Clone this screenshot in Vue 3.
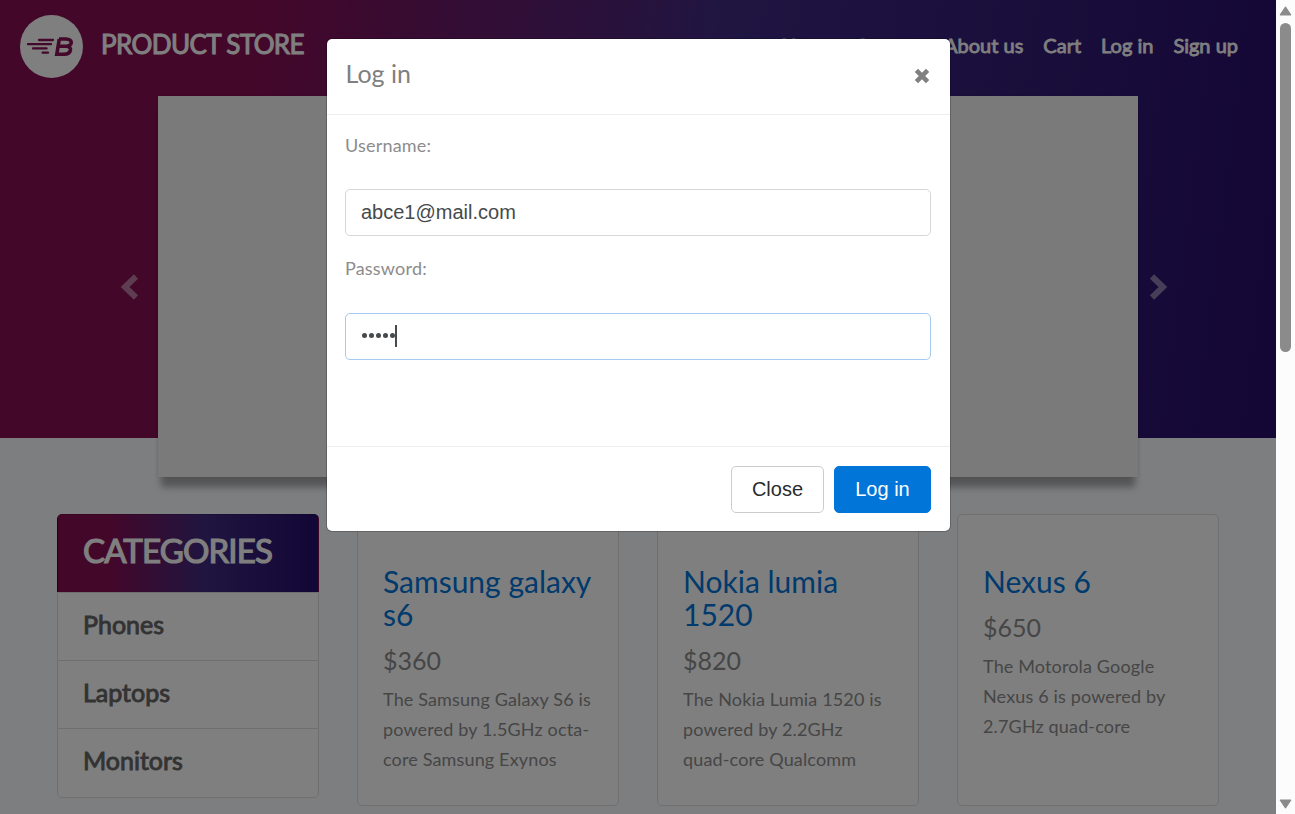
<script setup>
import { ref } from 'vue'

const links = ['Home', 'Contact', 'About us', 'Cart', 'Log in', 'Sign up']
const categories = ['Phones', 'Laptops', 'Monitors']
const products = [
  { name: 'Samsung galaxy s6', price: '$360', lines: ['The Samsung Galaxy S6 is', 'powered by 1.5GHz octa-', 'core Samsung Exynos'] },
  { name: 'Nokia lumia 1520', price: '$820', lines: ['The Nokia Lumia 1520 is', 'powered by 2.2GHz', 'quad-core Qualcomm'] },
  { name: 'Nexus 6', price: '$650', lines: ['The Motorola Google', 'Nexus 6 is powered by', '2.7GHz quad-core'] },
]
const username = ref('abce1@mail.com')
</script>

<template>
  <div class="window">
    <div class="page">
      <header class="hero">
        <nav class="navbar">
          <a class="brand">
            <svg class="logo" viewBox="0 0 63 63" aria-hidden="true">
              <circle cx="31.5" cy="31.5" r="31.5" fill="#fff" />
              <g stroke="#861054" stroke-width="2.3" stroke-linecap="round" fill="none">
                <path d="M19 25H33M8 29.2H31M13 33.4H26.6M22.6 37.7H28" />
                <path d="M39 24H46C53.5 24 52.5 31.3 46 31.3H38M46 31.3C53 31.3 51.5 39.2 44 39.2H36.8L39.3 24" stroke-width="3.6" stroke-linecap="butt" />
              </g>
            </svg>
            <span class="brand-name">PRODUCT STORE</span>
          </a>
          <ul class="links">
            <li v-for="l in links" :key="l">{{ l }}</li>
          </ul>
        </nav>
        <div class="carousel">
          <div class="control">
            <svg width="18" height="26" viewBox="0 0 18 26"><path d="M15 2.5L4 13L15 23.5" /></svg>
          </div>
          <div class="slide"></div>
          <div class="control">
            <svg width="18" height="26" viewBox="0 0 18 26"><path d="M3 2.5L14 13L3 23.5" /></svg>
          </div>
        </div>
      </header>

      <main class="content">
        <aside class="categories">
          <div class="cat-title">CATEGORIES</div>
          <div v-for="c in categories" :key="c" class="cat">{{ c }}</div>
        </aside>
        <article v-for="p in products" :key="p.name" class="card">
          <h4>{{ p.name }}</h4>
          <h5>{{ p.price }}</h5>
          <p><span v-for="t in p.lines" :key="t">{{ t }}</span></p>
        </article>
      </main>

      <div class="backdrop">
        <section class="modal">
          <div class="modal-header">
            <h5>Log in</h5>
            <svg class="close" width="16" height="16" viewBox="0 0 16 16"><path d="M2.4 2.4L13.6 13.6M13.6 2.4L2.4 13.6" /></svg>
          </div>
          <div class="modal-body">
            <label>Username:</label>
            <div class="field">{{ username }}</div>
            <label>Password:</label>
            <div class="field focused">
              <i v-for="n in 5" :key="n" class="dot"></i><i class="caret"></i>
            </div>
          </div>
          <div class="modal-footer">
            <button class="btn">Close</button>
            <button class="btn primary">Log in</button>
          </div>
        </section>
      </div>
    </div>
    <div class="scrollbar">
      <svg width="13" height="10" viewBox="0 0 13 10"><path d="M6.5 0.8L12 9H1Z" /></svg>
      <div class="thumb"></div>
      <svg width="13" height="10" viewBox="0 0 13 10"><path d="M6.5 9.2L12 1H1Z" /></svg>
    </div>
  </div>
</template>

<style>
body { margin: 0; overflow: hidden; }
</style>

<style scoped>
* { box-sizing: border-box; }
h4, h5, p, ul { margin: 0; padding: 0; font-weight: 400; }
.window { display: flex; width: 1295px; height: 814px; overflow: hidden; font-family: Lato, sans-serif; }
.page { position: relative; width: 1276px; height: 814px; background: #fafcff; color: #8c8c8c; }
.hero { height: 438px; background: linear-gradient(97deg, #860e54 20%, #402b84 55%, #290f6c 98%); }
.navbar { display: flex; justify-content: space-between; height: 96px; padding: 15px 38px 0 20px; color: #fff; }
.brand { display: flex; gap: 18px; }
.logo { width: 63px; height: 63px; }
.brand-name { font-size: 26px; line-height: 58px; letter-spacing: -0.6px; -webkit-text-stroke: 1px #fff; }
.links { display: flex; gap: 20px; list-style: none; font-size: 20px; line-height: 60px; letter-spacing: 0; -webkit-text-stroke: 0.8px #fff; }
.carousel { display: flex; align-items: center; height: 381px; padding-left: 121px; }
.slide { width: 980px; height: 381px; margin: 0 11px 0 19px; background: #f5f5f5; box-shadow: 0 13px 7px -3px rgba(0, 0, 0, 0.33), 0 0 2px rgba(0, 0, 0, 0.12); }
.control { width: 18px; height: 26px; }
.control svg { display: block; fill: none; stroke: #fff; stroke-width: 6; opacity: 0.45; }
.content { display: flex; align-items: flex-start; gap: 38px; padding: 76px 0 0 57px; }
.categories { width: 262px; height: 284px; color: #666; font-size: 25px; letter-spacing: 0; -webkit-text-stroke: 0.9px #666; }
.cat-title { height: 78px; padding-left: 25px; border: 1px solid rgba(0, 0, 0, 0.125); border-bottom: 0; border-radius: 5px 5px 0 0; background: linear-gradient(90deg, #860e54 20%, #402b80 56%, #260e6e 98%); color: #fff; font-size: 33px; line-height: 71px; letter-spacing: -0.85px; -webkit-text-stroke: 1.2px #fff; }
.cat { height: 68px; padding-left: 25px; border: 1px solid #dfdfdf; border-bottom: 0; background: #fff; line-height: 63px; }
.cat:last-child { height: 70px; border-bottom: 1px solid #dfdfdf; border-radius: 0 0 5px 5px; }
.card { width: 262px; height: 292px; padding: 50px 25px 0; border: 1px solid #dfdfdf; border-radius: 5px; background: #fff; }
.card h4 { color: #0275d8; font-size: 30px; line-height: 33px; }
.card h5 { margin-top: 15px; font-size: 25px; line-height: 28px; }
.card p { margin-top: 10px; font-size: 18px; line-height: 30px; letter-spacing: 0.15px; }
.card p span { display: block; white-space: nowrap; }
.backdrop { position: absolute; inset: 0; background: rgba(0, 0, 0, 0.5); }
.modal { width: 625px; height: 494px; margin: 38px 0 0 326px; border: 1px solid rgba(0, 0, 0, 0.2); border-radius: 6px; background: #fff; background-clip: padding-box; color: #8c8c8c; }
.modal-header { display: flex; justify-content: space-between; height: 76px; padding: 20px 20px 0 18.5px; border-bottom: 1px solid #eceeef; }
.modal-header h5 { color: #7f7f7f; font-size: 25px; line-height: 29px; }
.close { margin-top: 8.5px; fill: none; stroke: #808080; stroke-width: 4.6; }
.modal-body { height: 331px; padding: 15px 19px 0 18px; }
.modal-body label { display: block; height: 59px; font-size: 18px; line-height: 30px; letter-spacing: 0.2px; }
.field { display: flex; align-items: center; height: 47px; margin-bottom: 18px; padding: 0 15px 2px; border: 1px solid #d6d7d8; border-radius: 5px; color: #464a4c; font: 20px/44px "Liberation Sans", Arial, sans-serif; }
.field.focused { margin-top: 0; border-color: #a6cbee; }
.modal-body label:nth-of-type(2) { height: 60px; margin-top: -1px; line-height: 30px; }
.modal-body label:nth-of-type(2) + .field { margin-top: 0; }
.dot { width: 5px; height: 5px; margin: 0 1px; border-radius: 50%; background: #464a4c; }
.caret { width: 2px; height: 22px; margin-left: -1px; background: #464a4c; }
.modal-footer { display: flex; justify-content: flex-end; gap: 10px; height: 85px; padding: 19px 19px 0; border-top: 1px solid #eceeef; }
.btn { width: 93px; height: 47px; padding: 0; border: 1px solid #ccc; border-radius: 5px; background: #fff; color: #292b2c; font: 20px "Liberation Sans", Arial, sans-serif; }
.btn.primary { width: 97px; border-color: #0275d8; background: #0275d8; color: #fff; }
.scrollbar { display: flex; flex-direction: column; align-items: center; width: 19px; padding: 6px 0 5px; background: #fcfcfc; }
.scrollbar svg { display: block; fill: #8b8b8b; stroke: #8b8b8b; stroke-linejoin: round; }
.thumb { width: 11px; height: 329px; margin: 7px 0 auto; border-radius: 6px; background: #8b8b8b; }
</style>
